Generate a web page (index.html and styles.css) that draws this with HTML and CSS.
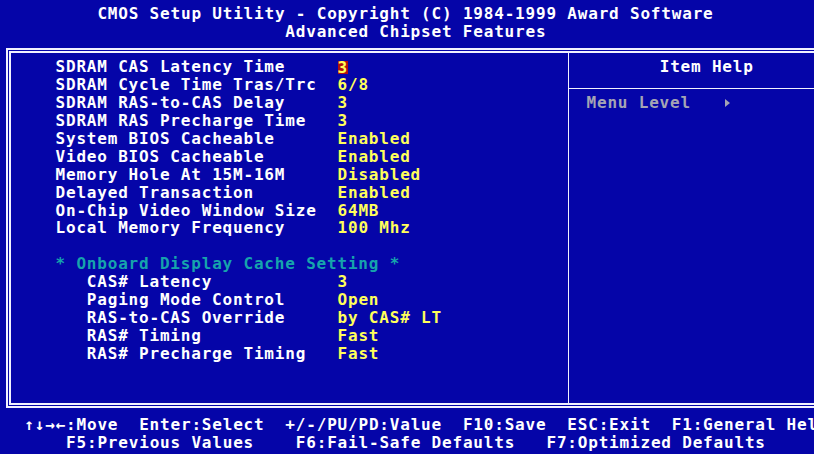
FILE: index.html
```html
<!DOCTYPE html>
<html lang="en">
<head>
    <meta charset="UTF-8">
    <meta name="viewport" content="width=device-width, initial-scale=1.0">
    <title>CMOS Setup Utility - Advanced Chipset Features</title>
    <link rel="stylesheet" href="styles.css">
</head>
<body>
    <div class="screen">
        <div class="title">
            <div class="title-line first">CMOS Setup Utility - Copyright (C) 1984-1999 Award Software</div>
            <div class="title-line second">Advanced Chipset Features</div>
        </div>

        <div class="frame">
            <div class="settings">
                <div class="row"><span class="label">SDRAM CAS Latency Time</span><span class="value"><span class="cursor">3</span></span></div>
                <div class="row"><span class="label">SDRAM Cycle Time Tras/Trc</span><span class="value">6/8</span></div>
                <div class="row"><span class="label">SDRAM RAS-to-CAS Delay</span><span class="value">3</span></div>
                <div class="row"><span class="label">SDRAM RAS Precharge Time</span><span class="value">3</span></div>
                <div class="row"><span class="label">System BIOS Cacheable</span><span class="value">Enabled</span></div>
                <div class="row"><span class="label">Video BIOS Cacheable</span><span class="value">Enabled</span></div>
                <div class="row"><span class="label">Memory Hole At 15M-16M</span><span class="value">Disabled</span></div>
                <div class="row"><span class="label">Delayed Transaction</span><span class="value">Enabled</span></div>
                <div class="row"><span class="label">On-Chip Video Window Size</span><span class="value">64MB</span></div>
                <div class="row"><span class="label">Local Memory Frequency</span><span class="value">100 Mhz</span></div>
                <div class="row blank"></div>
                <div class="row group">* Onboard Display Cache Setting *</div>
                <div class="row sub"><span class="label">CAS# Latency</span><span class="value">3</span></div>
                <div class="row sub"><span class="label">Paging Mode Control</span><span class="value">Open</span></div>
                <div class="row sub"><span class="label">RAS-to-CAS Override</span><span class="value">by CAS# LT</span></div>
                <div class="row sub"><span class="label">RAS# Timing</span><span class="value">Fast</span></div>
                <div class="row sub"><span class="label">RAS# Precharge Timing</span><span class="value">Fast</span></div>
            </div>

            <div class="help">
                <div class="help-title">Item Help</div>
                <div class="help-body"><span class="menu-level">Menu Level   </span><span class="arrow"></span></div>
            </div>
        </div>

        <div class="keys">
            <div class="keys-line first">&#8593;&#8595;&#8594;&#8592;:Move  Enter:Select  +/-/PU/PD:Value  F10:Save  ESC:Exit  F1:General Help</div>
            <div class="keys-line second">F5:Previous Values    F6:Fail-Safe Defaults   F7:Optimized Defaults</div>
        </div>
    </div>
</body>
</html>
```

FILE: styles.css
```css
/* text-mode screen: 10.44px columns, 17.9px rows */
body {
    margin: 0;
    background-color: #0505a8;
    color: #ffffff;
    font-family: "DejaVu Sans Mono", monospace;
    font-weight: bold;
    font-size: 16px;
    line-height: 17.9px;
    letter-spacing: 0.81px;
    overflow: hidden;
    height: 454px;
}

.title-line,
.label,
.value,
.row.group,
.help-title,
.help-body,
.keys-line {
    white-space: pre;
}

.screen {
    width: 835px;
    margin-left: -7px;
    padding-top: 5px;
}

.title-line {
    height: 17.9px;
}

.title-line.first {
    padding-left: 104.4px;
}

.title-line.second {
    padding-left: 292.3px;
}

/* double-line box round the menu */
.frame {
    display: flex;
    margin-top: 7.7px;
    margin-left: 12.5px;
    width: 817.5px;
    height: 359.5px;
    box-sizing: border-box;
    border: 5px double #f2f2ff;
}

.settings {
    width: 558.5px;
    padding-top: 5px;
    padding-left: 45px;
    box-sizing: border-box;
    border-right: 1.5px solid #f2f2ff;
    flex-shrink: 0;
}

.row {
    display: grid;
    grid-template-columns: 282px auto;
    height: 17.9px;
}

.row.sub .label {
    padding-left: 31.3px;
}

.row.group {
    display: block;
    color: #16a4ac;
}

.value {
    color: #ffff5a;
}

.cursor {
    display: inline-block;
    background-color: #b01010;
    line-height: 13px;
    height: 13px;
    margin-top: 2.5px;
    padding-right: 0.5px;
    vertical-align: top;
}

.help {
    flex: 1;
}

.help-title {
    height: 29.5px;
    padding-top: 5px;
    padding-left: 90.7px;
    border-bottom: 1.5px solid #f2f2ff;
}

.help-body {
    padding-top: 5px;
    padding-left: 17.5px;
    color: #a4a4b4;
}

/* small right-pointing triangle after "Menu Level" */
.arrow {
    display: inline-block;
    width: 0;
    height: 0;
    margin-left: 3px;
    border-left: 5px solid #a4a4b4;
    border-top: 4px solid transparent;
    border-bottom: 4px solid transparent;
    vertical-align: 1px;
}

.keys {
    margin-top: 8.5px;
}

.keys-line {
    height: 17.9px;
}

.keys-line.first {
    padding-left: 31.3px;
}

.keys-line.second {
    padding-left: 73.1px;
}
```
